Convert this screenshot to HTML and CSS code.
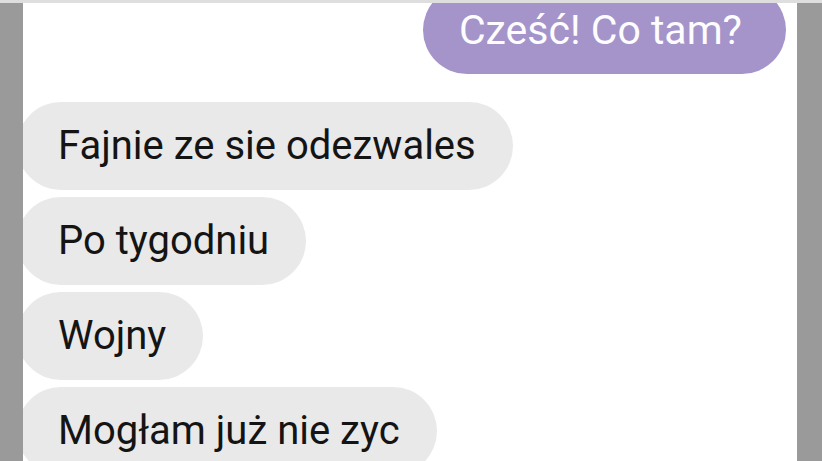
FILE: index.html
```html
<!DOCTYPE html>
<html lang="pl">

<head>
    <meta charset="UTF-8">
    <meta name="viewport" content="width=device-width, initial-scale=1.0">
    <title>Czat</title>
    <link rel="stylesheet" href="styles.css">
</head>

<body>
    <div class="top-strip"></div>
    <div class="frame">
        <div class="chat">
            <div class="bubble sent">Cześć! Co tam?</div>
            <div class="bubble received">Fajnie ze sie odezwales</div>
            <div class="bubble received">Po tygodniu</div>
            <div class="bubble received">Wojny</div>
            <div class="bubble received">Mogłam już nie zyc</div>
        </div>
    </div>
</body>

</html>
```

FILE: styles.css
```css
body {
    margin: 0;
    height: 461px;
    overflow: hidden;
    background: #9a9a9a;
    font-family: Roboto, "Liberation Sans", sans-serif;
}

.top-strip {
    height: 3px;
    background: #dedede;
}

.frame {
    margin: 0 25px 0 23px;
    height: 458px;
    background: #ffffff;
    overflow: hidden;
}

.chat {
    display: flex;
    flex-direction: column;
    align-items: flex-start;
    gap: 7px;
}

.bubble {
    height: 88px;
    line-height: 88px;
    font-size: 40px;
    border-radius: 44px;
    white-space: nowrap;
}

.sent {
    align-self: flex-end;
    margin-top: -17px;
    margin-right: 11px;
    margin-bottom: 21px;
    padding: 0 44px 0 36px;
    font-size: 41px;
    background: #a594c9;
    color: #fdfcff;
}

.received {
    margin-left: -6px;
    padding: 0 37px 0 41px;
    background: #e9e9e9;
    color: #141414;
}
```
